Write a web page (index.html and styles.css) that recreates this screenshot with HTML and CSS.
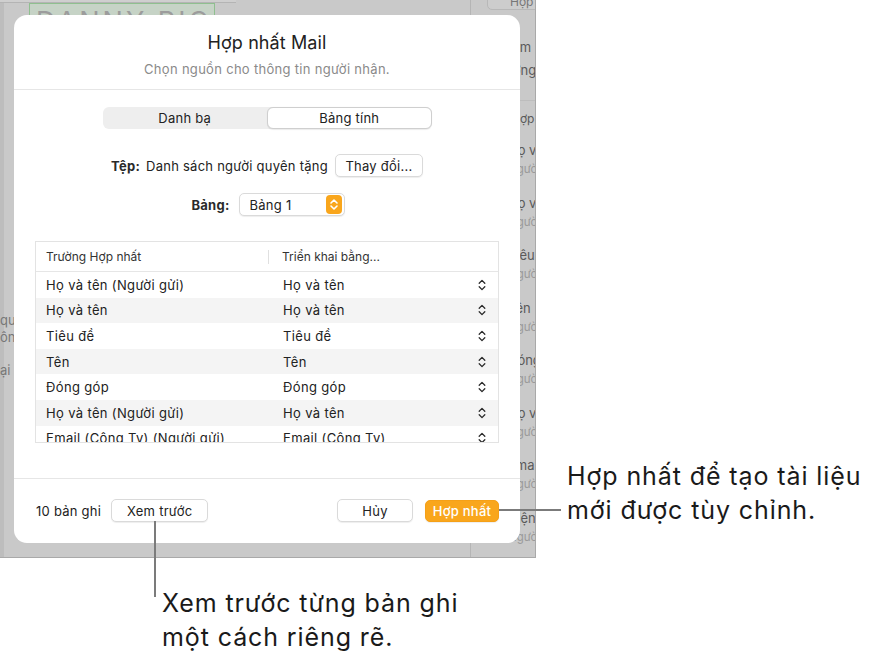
FILE: index.html
```html
<!DOCTYPE html>
<html lang="vi">
<head>
<meta charset="utf-8">
<title>Hợp nhất Mail</title>
<link rel="stylesheet" href="styles.css">
</head>
<body>
<div class="stage">
  <div class="app">
    <div class="main">
      <div class="toolbar-line"></div>
      <div class="namebox"><span>DANNY RICO</span></div>
      <div class="left-frag">
        <div>qu</div>
        <div>ôn</div>
        <div class="gap">ại</div>
      </div>
    </div>
    <div class="sidebar">
      <div class="side-btn">Hợp nhất</div>
      <div class="side-top">
        <div>Thêm</div>
        <div>trường (</div>
      </div>
      <div class="side-head">Hợp nhất</div>
      <div class="side-item"><div class="si-t">Họ và tên</div><div class="si-s">Người gửi</div></div>
      <div class="side-item"><div class="si-t">Họ và tên</div><div class="si-s">Người gửi</div></div>
      <div class="side-item"><div class="si-t">Tiêu đề</div><div class="si-s">Người gửi</div></div>
      <div class="side-item"><div class="si-t">Tên</div><div class="si-s">Người gửi</div></div>
      <div class="side-item"><div class="si-t">Đóng góp</div><div class="si-s">Người gửi</div></div>
      <div class="side-item"><div class="si-t">Họ và tên</div><div class="si-s">Người gửi</div></div>
      <div class="side-item"><div class="si-t">Email</div><div class="si-s">Người gửi</div></div>
      <div class="side-item"><span class="dot"></span><div class="si-t">Điện thoại</div><div class="si-s">Người gửi</div></div>
    </div>

    <div class="dialog">
      <div class="dlg-head">
        <div class="title">Hợp nhất Mail</div>
        <div class="subtitle">Chọn nguồn cho thông tin người nhận.</div>
      </div>
      <div class="dlg-body">
        <div class="segmented">
          <div class="seg">Danh bạ</div>
          <div class="seg active">Bảng tính</div>
        </div>
        <div class="file-row">
          <span class="lbl">Tệp:</span>
          <span class="file-name">Danh sách người quyên tặng</span>
          <button class="btn change">Thay đổi...</button>
        </div>
        <div class="table-row-sel">
          <span class="lbl">Bảng:</span>
          <div class="popup">
            <span>Bảng 1</span>
            <span class="popup-icon">
              <svg width="10" height="13" viewBox="0 0 10 13"><path d="M2 5 L5 2 L8 5 M2 8 L5 11 L8 8" fill="none" stroke="#fff" stroke-width="1.6" stroke-linecap="round" stroke-linejoin="round"/></svg>
            </span>
          </div>
        </div>
        <div class="table">
          <div class="thead">
            <div class="th c1">Trường Hợp nhất</div>
            <div class="th c2">Triển khai bằng...</div>
          </div>
          <div class="tbody">
            <div class="tr"><div class="c1">Họ và tên (Người gửi)</div><div class="c2">Họ và tên</div><svg class="step" width="8" height="12" viewBox="0 0 8 12"><path d="M1.2 4.2 L4 1.4 L6.8 4.2 M1.2 7.8 L4 10.6 L6.8 7.8" fill="none" stroke="#2a2a2a" stroke-width="1.3" stroke-linecap="round" stroke-linejoin="round"/></svg></div>
            <div class="tr alt"><div class="c1">Họ và tên</div><div class="c2">Họ và tên</div><svg class="step" width="8" height="12" viewBox="0 0 8 12"><path d="M1.2 4.2 L4 1.4 L6.8 4.2 M1.2 7.8 L4 10.6 L6.8 7.8" fill="none" stroke="#2a2a2a" stroke-width="1.3" stroke-linecap="round" stroke-linejoin="round"/></svg></div>
            <div class="tr"><div class="c1">Tiêu đề</div><div class="c2">Tiêu đề</div><svg class="step" width="8" height="12" viewBox="0 0 8 12"><path d="M1.2 4.2 L4 1.4 L6.8 4.2 M1.2 7.8 L4 10.6 L6.8 7.8" fill="none" stroke="#2a2a2a" stroke-width="1.3" stroke-linecap="round" stroke-linejoin="round"/></svg></div>
            <div class="tr alt"><div class="c1">Tên</div><div class="c2">Tên</div><svg class="step" width="8" height="12" viewBox="0 0 8 12"><path d="M1.2 4.2 L4 1.4 L6.8 4.2 M1.2 7.8 L4 10.6 L6.8 7.8" fill="none" stroke="#2a2a2a" stroke-width="1.3" stroke-linecap="round" stroke-linejoin="round"/></svg></div>
            <div class="tr"><div class="c1">Đóng góp</div><div class="c2">Đóng góp</div><svg class="step" width="8" height="12" viewBox="0 0 8 12"><path d="M1.2 4.2 L4 1.4 L6.8 4.2 M1.2 7.8 L4 10.6 L6.8 7.8" fill="none" stroke="#2a2a2a" stroke-width="1.3" stroke-linecap="round" stroke-linejoin="round"/></svg></div>
            <div class="tr alt"><div class="c1">Họ và tên (Người gửi)</div><div class="c2">Họ và tên</div><svg class="step" width="8" height="12" viewBox="0 0 8 12"><path d="M1.2 4.2 L4 1.4 L6.8 4.2 M1.2 7.8 L4 10.6 L6.8 7.8" fill="none" stroke="#2a2a2a" stroke-width="1.3" stroke-linecap="round" stroke-linejoin="round"/></svg></div>
            <div class="tr"><div class="c1">Email (Công Ty) (Người gửi)</div><div class="c2">Email (Công Ty)</div><svg class="step" width="8" height="12" viewBox="0 0 8 12"><path d="M1.2 4.2 L4 1.4 L6.8 4.2 M1.2 7.8 L4 10.6 L6.8 7.8" fill="none" stroke="#2a2a2a" stroke-width="1.3" stroke-linecap="round" stroke-linejoin="round"/></svg></div>
          </div>
        </div>
      </div>
      <div class="dlg-foot">
        <span class="count">10 bản ghi</span>
        <button class="btn preview">Xem trước</button>
        <span class="spacer"></span>
        <button class="btn cancel">Hủy</button>
        <button class="btn primary">Hợp nhất</button>
      </div>
    </div>
  </div>

  <div class="line-h"></div>
  <div class="line-v"></div>
  <div class="callout c-merge">Hợp nhất để tạo tài liệu<br>mới được tùy chỉnh.</div>
  <div class="callout c-preview">Xem trước từng bản ghi<br>một cách riêng rẽ.</div>
</div>
</body>
</html>
```

FILE: styles.css
```css
* { box-sizing: border-box; }
html, body { margin: 0; padding: 0; background: #fff; }
body { font-family: Inter, "Noto Sans", "Liberation Sans", sans-serif; color: #1d1d1f; }

.stage { position: relative; width: 880px; height: 660px; overflow: hidden; }

/* dimmed app screenshot behind the dialog */
.app {
  position: relative;
  width: 536px;
  height: 558px;
  background: #c9c9c9;
  border-right: 1px solid #a9a9a9;
  border-bottom: 1px solid #a9a9a9;
  display: grid;
  grid-template-columns: 470px 1fr;
  overflow: hidden;
}
.main { position: relative; border-left: 4px solid #bdbdbd; }
.toolbar-line { height: 3px; width: 236px; border-bottom: 1px solid #b4b4b4; background: #cfcfcf; margin-left: -4px; }
.namebox {
  margin: 0 0 0 25px;
  width: 186px;
  height: 30px;
  border: 1px solid #8fbf8f;
  background: #c6d3c6;
  overflow: hidden;
}
.namebox span { display: block; font-size: 27px; letter-spacing: 3px; color: #9c9c9c; padding-left: 6px; line-height: 30px; margin-top: 3px; white-space: nowrap; }
.left-frag { margin-top: 279px; margin-left: -4px; font-size: 13px; color: #777; line-height: 17px; }
.left-frag .gap { margin-top: 16px; }

.sidebar { border-left: 1px solid #b5b5b5; font-size: 13px; color: #5a5a5a; }
.side-btn { margin: -6px 0 0 16px; height: 16px; border: 1px solid #b8b8b8; border-radius: 5px; background: #cdcdcd; padding: 0 0 0 22px; font-size: 12px; line-height: 14px; color: #777; white-space: nowrap; overflow: hidden; }
.side-top { padding: 26px 0 0 25px; line-height: 23px; white-space: nowrap; }
.side-head { margin-top: 18px; border-top: 1px solid #bdbdbd; padding: 10px 0 0 40px; height: 38px; font-size: 12px; white-space: nowrap; }
.side-item { position: relative; height: 52.5px; padding: 3px 0 0 37px; white-space: nowrap; }
.si-t { line-height: 18px; }
.si-s { font-size: 11.5px; color: #9a9a9a; line-height: 20px; }
.dot { position: absolute; left: 12px; top: 8px; width: 10px; height: 10px; border-radius: 50%; background: #7cbb7c; }

/* dialog */
.dialog {
  position: absolute;
  left: 14px;
  top: 15px;
  width: 506px;
  height: 528px;
  background: #fff;
  border-radius: 13px;
  display: flex;
  flex-direction: column;
  letter-spacing: 0.25px;
}
.dlg-head { padding-top: 17px; padding-bottom: 11px; border-bottom: 1px solid #e6e6e6; text-align: center; }
.title { font-size: 18px; line-height: 22px; color: #222; letter-spacing: 0.1px; }
.subtitle { margin-top: 6px; font-size: 13px; line-height: 18px; color: #8a8a8a; letter-spacing: 0.3px; }

.dlg-body { padding-top: 17px; display: flex; flex-direction: column; align-items: center; flex: 1; }
.segmented {
  display: grid; grid-template-columns: 1fr 1fr;
  width: 329px; height: 22px;
  background: #eeeeee; border-radius: 6px;
}
.seg { font-size: 13px; line-height: 22px; text-align: center; color: #222; }
.seg.active { background: #fff; border: 1px solid #cfcfcf; border-radius: 6px; line-height: 20px; box-shadow: 0 0.5px 1px rgba(0,0,0,0.08); }

.lbl { font-weight: 700; font-size: 13px; color: #2a2a2a; }
.file-row { margin-top: 25px; display: flex; align-items: center; gap: 6px; font-size: 13px; }
.file-row .file-name { margin-right: 1px; color: #222; }
.btn {
  font-family: inherit; font-size: 13px; color: #222; letter-spacing: 0.25px;
  background: #fff; border: 1px solid #dadada; border-radius: 5px;
  box-shadow: 0 1px 1px rgba(0,0,0,0.07);
  height: 23px; padding: 0; cursor: default;
}
.change { width: 88px; }

.table-row-sel { margin-top: 16px; display: flex; align-items: center; gap: 9px; padding-left: 2px; }
.popup {
  display: flex; align-items: center; justify-content: space-between;
  width: 106px; height: 23px; padding: 0 2px 0 10px;
  background: #fff; border: 1px solid #dadada; border-radius: 5px;
  box-shadow: 0 1px 1px rgba(0,0,0,0.07);
  font-size: 13px; color: #222;
}
.popup-icon { width: 16px; height: 19px; border-radius: 4px; background: #f9a61c; display: flex; align-items: center; justify-content: center; }

.table { margin-top: 25px; width: 464px; height: 202px; border: 1px solid #e3e3e3; display: flex; flex-direction: column; }
.thead { height: 30px; flex: none; display: grid; grid-template-columns: 232px 1fr; border-bottom: 1px solid #e6e6e6; align-items: center; }
.th { font-size: 12px; color: #333; letter-spacing: 0; }
.thead .c1 { padding-left: 10px; }
.thead .c2 { padding-left: 13px; border-left: 1px solid #e0e0e0; line-height: 14px; }
.tbody { flex: 1; overflow: hidden; }
.tr { display: grid; grid-template-columns: 232px 1fr 8px; align-items: center; height: 25.6px; padding-right: 12px; font-size: 13px; color: #222; letter-spacing: 0.35px; }
.tr.alt { background: #f4f4f4; }
.tr .c1 { padding-left: 10px; white-space: nowrap; }
.tr .c2 { padding-left: 15px; white-space: nowrap; }

.dlg-foot { height: 65px; flex: none; border-top: 1px solid #e6e6e6; display: flex; align-items: center; padding: 0 21px 1px 22px; gap: 10px; }
.count { font-size: 13px; color: #222; }
.preview { width: 97px; }
.spacer { flex: 1; }
.cancel { width: 76px; margin-right: 2px; }
.primary { width: 74px; background: #f9a61c; border-color: #f5a017; color: #fff; font-weight: 500; height: 22px; }

/* annotations */
.line-h { position: absolute; left: 499px; top: 509px; width: 62px; height: 2px; background: #7b7b7b; }
.line-v { position: absolute; left: 154px; top: 521px; width: 2px; height: 76px; background: #7b7b7b; }
.callout { position: absolute; font-size: 25px; line-height: 34px; color: #1a1a1a; white-space: nowrap; letter-spacing: 0.9px; }
.c-merge { left: 567px; top: 459px; }
.c-preview { left: 162px; top: 586px; }
```
